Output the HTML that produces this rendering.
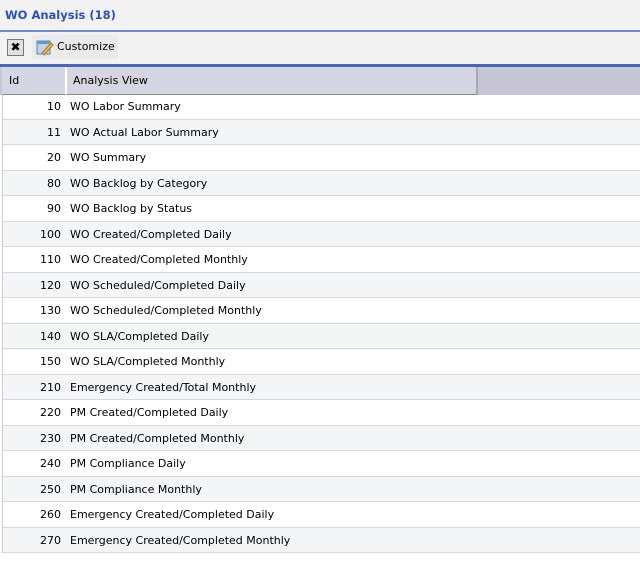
<!DOCTYPE html>
<html><head><style>
body{margin:0;width:640px;height:561px;background:#fff;font-family:"DejaVu Sans","Liberation Sans",sans-serif;overflow:hidden;position:relative}
.title{position:absolute;left:0;top:0;width:640px;height:30px;background:#f2f2f2;border-bottom:2px solid #6f8ad6}
.title span{position:absolute;left:5px;top:8px;font-weight:bold;font-size:11.5px;color:#2b4fc0}
.tb{position:absolute;left:0;top:32px;width:640px;height:32px;background:#f2f2f2}
.x{position:absolute;left:7px;top:7px;width:15px;height:15px;border:1px solid #777;background:#e0e0e0;font-size:12px;font-weight:900;line-height:15px;text-align:center}
.cust{position:absolute;left:32px;top:3px;width:86px;height:24px;background:#eaeaea;border-radius:2px}
.cust span{position:absolute;left:25px;top:5px;font-size:11px}
.hdr{position:absolute;left:0;top:64px;width:640px;height:28px;background:#c6c6d6;border-top:3px solid #4466bb}
.h1{position:absolute;left:2px;top:0;width:63px;height:27px;background:#d6d6e2;border-right:2px solid #fff;border-bottom:1px solid #888}
.h2{position:absolute;left:67px;top:0;width:409px;height:27px;background:#d6d6e2;border-right:2px solid #aaa;border-bottom:1px solid #888}
.hdr span{position:absolute;top:7px;font-size:11px}
.rows{position:absolute;left:2px;top:94px;width:638px;border-left:1px solid #ccc}
.r{height:24.5px;border-bottom:1px solid #d6d8df;position:relative;font-size:11px}
.r:nth-child(even){background:#f4f5f7}
.r .id{position:absolute;right:580px;top:6px}
.r .n{position:absolute;left:67px;top:6px}
</style></head><body>
<div class="title"><span>WO Analysis (18)</span></div>
<div class="tb"><div class="x">✖</div><div class="cust">
<svg style="position:absolute;left:4px;top:3px" width="18" height="18"><rect x="1" y="3" width="13" height="13" fill="#bcd3ee" stroke="#5a82b8"/><rect x="1" y="3" width="13" height="3" fill="#6f95c8"/><path d="M6 15 L15 5 L17 7 L8 17 Z" fill="#f0b840" stroke="#b07a20"/></svg>
<span>Customize</span></div></div>
<div class="hdr"><div class="h1"><span style="left:7px">Id</span></div><div class="h2"><span style="left:6px">Analysis View</span></div></div>
<div class="rows">
<div class="r"><span class="id">10</span><span class="n">WO Labor Summary</span></div>
<div class="r"><span class="id">11</span><span class="n">WO Actual Labor Summary</span></div>
<div class="r"><span class="id">20</span><span class="n">WO Summary</span></div>
<div class="r"><span class="id">80</span><span class="n">WO Backlog by Category</span></div>
<div class="r"><span class="id">90</span><span class="n">WO Backlog by Status</span></div>
<div class="r"><span class="id">100</span><span class="n">WO Created/Completed Daily</span></div>
<div class="r"><span class="id">110</span><span class="n">WO Created/Completed Monthly</span></div>
<div class="r"><span class="id">120</span><span class="n">WO Scheduled/Completed Daily</span></div>
<div class="r"><span class="id">130</span><span class="n">WO Scheduled/Completed Monthly</span></div>
<div class="r"><span class="id">140</span><span class="n">WO SLA/Completed Daily</span></div>
<div class="r"><span class="id">150</span><span class="n">WO SLA/Completed Monthly</span></div>
<div class="r"><span class="id">210</span><span class="n">Emergency Created/Total Monthly</span></div>
<div class="r"><span class="id">220</span><span class="n">PM Created/Completed Daily</span></div>
<div class="r"><span class="id">230</span><span class="n">PM Created/Completed Monthly</span></div>
<div class="r"><span class="id">240</span><span class="n">PM Compliance Daily</span></div>
<div class="r"><span class="id">250</span><span class="n">PM Compliance Monthly</span></div>
<div class="r"><span class="id">260</span><span class="n">Emergency Created/Completed Daily</span></div>
<div class="r"><span class="id">270</span><span class="n">Emergency Created/Completed Monthly</span></div>
</div>
</body></html>
